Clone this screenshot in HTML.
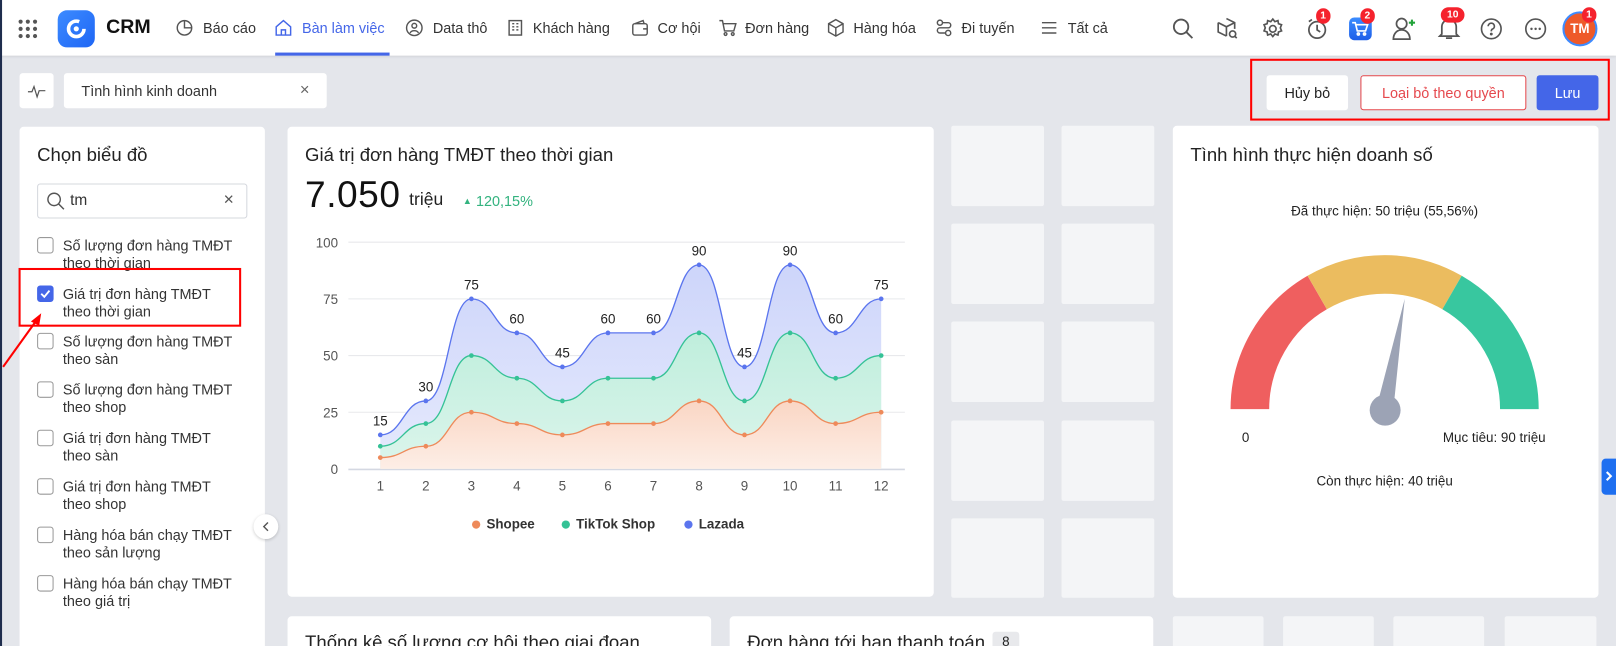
<!DOCTYPE html>
<html><head><meta charset="utf-8">
<style>
*{box-sizing:border-box;margin:0;padding:0}
html,body{width:1616px;height:646px;overflow:hidden;background:#e4e6eb}
body{font-family:"Liberation Sans","Noto Sans CJK SC",sans-serif;color:#222}
#w{position:absolute;left:0;top:0;width:1568px;height:627px;transform:scale(1.03061);transform-origin:0 0;background:#e4e6eb;overflow:hidden}
.a{position:absolute}
.top{left:0;top:0;width:1568px;height:54px;background:#fff;box-shadow:0 1px 3px rgba(0,0,0,.12)}
.nav{position:absolute;top:19px;font-size:14px;color:#333;white-space:nowrap}
.ni{position:absolute;top:18px}
.card{position:absolute;background:#fff;border-radius:4px}
.tile{position:absolute;background:#f4f5f7;border-radius:2px}
.cb{position:absolute;left:36px;width:16px;height:16px;border:1.3px solid #999;border-radius:3px;background:#fff}
.it{position:absolute;left:61px;font-size:14px;line-height:17px;color:#333}
.badge{position:absolute;background:#f5222d;color:#fff;font-size:10px;font-weight:bold;border-radius:8px;height:15px;line-height:15px;text-align:center;padding:0 4px}
</style></head><body><div id="w">
<div style="position:absolute;left:0;top:0;width:2px;height:627px;background:#1f2d4d;z-index:5"></div>
<div class="a top">
<svg class="a" style="left:17px;top:18px" width="20" height="20"><g fill="#555"><circle cx="3" cy="3" r="2"/><circle cx="10" cy="3" r="2"/><circle cx="17" cy="3" r="2"/><circle cx="3" cy="10" r="2"/><circle cx="10" cy="10" r="2"/><circle cx="17" cy="10" r="2"/><circle cx="3" cy="17" r="2"/><circle cx="10" cy="17" r="2"/><circle cx="17" cy="17" r="2"/></g></svg>
<div class="a" style="left:56px;top:10px;width:36px;height:36px;border-radius:9px;background:linear-gradient(135deg,#3d8bff,#1e66f5)"></div>
<svg class="a" style="left:63px;top:17px" width="22" height="22"><circle cx="11" cy="11" r="7.5" fill="none" stroke="#fff" stroke-width="3.5" stroke-dasharray="38 9"/><circle cx="11" cy="11" r="2.5" fill="#fff"/></svg>
<div class="a" style="left:103px;top:16px;font-size:19px;font-weight:bold;color:#111">CRM</div>
<svg class="ni" style="left:170px" width="18" height="18" fill="none" stroke="#555" stroke-width="1.4"><circle cx="9" cy="9" r="7"/><path d="M9 2v7h7"/></svg><div class="nav" style="left:197px">Báo cáo</div>
<svg class="ni" style="left:266px" width="18" height="18" fill="none" stroke="#4466e8" stroke-width="1.4"><path d="M2 8 9 2l7 6v8H2z M7 16v-5h4v5"/></svg><div class="nav" style="left:293px;color:#4466e8">Bàn làm việc</div>
<div class="a" style="left:267px;top:51px;width:111px;height:3px;background:#4466e8"></div>
<svg class="ni" style="left:393px" width="18" height="18" fill="none" stroke="#555" stroke-width="1.4"><circle cx="9" cy="9" r="7.5"/><circle cx="9" cy="7" r="2.3"/><path d="M5 14c1-3 7-3 8 0"/></svg><div class="nav" style="left:420px">Data thô</div>
<svg class="ni" style="left:491px" width="18" height="18" fill="none" stroke="#555" stroke-width="1.4"><rect x="3" y="2" width="12" height="14"/><path d="M6 5h2M10 5h2M6 8h2M10 8h2M6 11h2M10 11h2"/></svg><div class="nav" style="left:517px">Khách hàng</div>
<svg class="ni" style="left:612px" width="18" height="18" fill="none" stroke="#555" stroke-width="1.4"><rect x="2" y="5" width="14" height="11" rx="2"/><path d="M4 5 12 2l1 3M12 10h4"/></svg><div class="nav" style="left:638px">Cơ hội</div>
<svg class="ni" style="left:697px" width="18" height="18" fill="none" stroke="#555" stroke-width="1.4"><path d="M1 2h3l2 10h9l2-7H5"/><circle cx="7" cy="15" r="1.3"/><circle cx="14" cy="15" r="1.3"/></svg><div class="nav" style="left:723px">Đơn hàng</div>
<svg class="ni" style="left:802px" width="18" height="18" fill="none" stroke="#555" stroke-width="1.4"><path d="M9 1 16 5v8l-7 4-7-4V5zM2 5l7 4 7-4M9 9v8"/></svg><div class="nav" style="left:828px">Hàng hóa</div>
<svg class="ni" style="left:907px" width="18" height="18" fill="none" stroke="#555" stroke-width="1.4"><circle cx="5" cy="4" r="2.5"/><circle cx="13" cy="14" r="2.5"/><path d="M7.5 4H13a2.5 2.5 0 0 1 0 5H5a2.5 2.5 0 0 0 0 5h5.5"/></svg><div class="nav" style="left:933px">Đi tuyến</div>
<svg class="ni" style="left:1009px" width="18" height="18" fill="none" stroke="#555" stroke-width="1.4"><path d="M2 4h14M2 9h14M2 14h14"/></svg><div class="nav" style="left:1036px">Tất cả</div>
<svg class="a" style="left:1137px;top:17px" width="22" height="22" fill="none" stroke="#555" stroke-width="1.8"><circle cx="9" cy="9" r="7"/><path d="M14 14l6 6"/></svg>
<svg class="a" style="left:1180px;top:17px" width="22" height="22" fill="none" stroke="#555" stroke-width="1.6"><path d="M10 1 18 5v6M2 5v9l8 4M2 5l8 4 8-4M10 9v9"/><circle cx="16" cy="16" r="3"/><path d="M18 18l2 2"/></svg>
<svg class="a" style="left:1224px;top:17px" width="22" height="22" fill="none" stroke="#555" stroke-width="1.6"><circle cx="11" cy="11" r="3.2"/><path d="M11 1.5l2 2.5 3-1 .5 3 3 1-1.2 3 1.2 3-3 1-.5 3-3-1-2 2.5-2-2.5-3 1-.5-3-3-1 1.2-3-1.2-3 3-1 .5-3 3 1z"/></svg>
<svg class="a" style="left:1267px;top:17px" width="22" height="22" fill="none" stroke="#555" stroke-width="1.7"><circle cx="11" cy="12" r="8"/><path d="M11 7v5l3 2M3 4l3-2M19 4l-3-2"/></svg>
<div class="badge" style="left:1277px;top:8px">1</div>
<div class="a" style="left:1309px;top:17px;width:22px;height:22px;border-radius:5px;background:linear-gradient(#3b8cff,#1e5fe8)"></div>
<svg class="a" style="left:1311px;top:20px" width="18" height="16" fill="none" stroke="#fff" stroke-width="1.6"><path d="M1 2h3l2 8h8l2-6H5"/><circle cx="7" cy="13" r="1"/><circle cx="13" cy="13" r="1"/></svg>
<div class="badge" style="left:1320px;top:8px">2</div>
<svg class="a" style="left:1350px;top:15px" width="26" height="26" fill="none" stroke="#555" stroke-width="1.7"><circle cx="10" cy="8" r="5"/><path d="M2 23c0-6 4-9 8-9s8 3 8 9z"/><path d="M20 4v6M17 7h6" stroke="#22a33a" stroke-width="2"/></svg>
<svg class="a" style="left:1395px;top:16px" width="22" height="24" fill="none" stroke="#555" stroke-width="1.7"><path d="M4 17V10a7 7 0 0 1 14 0v7l2 2H2zM8 21h6"/></svg>
<div class="badge" style="left:1398px;top:7px;padding:0 6px">10</div>
<svg class="a" style="left:1436px;top:17px" width="22" height="22" fill="none" stroke="#555" stroke-width="1.6"><circle cx="11" cy="11" r="9.5"/><path d="M8 8.5a3 3 0 1 1 4 2.8c-1 .4-1 1-1 2.2"/><circle cx="11" cy="16" r=".6" fill="#555"/></svg>
<svg class="a" style="left:1479px;top:17px" width="22" height="22" fill="none" stroke="#555" stroke-width="1.6"><circle cx="11" cy="11" r="9.5"/><g fill="#555" stroke="none"><circle cx="7" cy="11" r="1.2"/><circle cx="11" cy="11" r="1.2"/><circle cx="15" cy="11" r="1.2"/></g></svg>
<div class="a" style="left:1516px;top:11px;width:34px;height:34px;border-radius:50%;border:2.5px solid #3d8bff;background:#ee5a2a;color:#fff;font-size:13px;font-weight:bold;text-align:center;line-height:29px">TM</div>
<div class="badge" style="left:1535px;top:7px">1</div>
</div>

<div class="a" style="left:19px;top:71px;width:33px;height:34px;background:#fff;border-radius:3px"></div>
<svg class="a" style="left:27px;top:80px" width="18" height="16" fill="none" stroke="#555" stroke-width="1.2"><path d="M0 9h4l2-5 3 10 2-6h6"/></svg>
<div class="a" style="left:62px;top:71px;width:255px;height:34px;background:#fff;border-radius:3px;font-size:14px;line-height:34px;padding-left:17px;color:#333">Tình hình kinh doanh<span style="position:absolute;left:229px;color:#666;font-size:16px">×</span></div>

<div class="a" style="left:1213px;top:57px;width:349px;height:60px;border:2px solid #f00"></div>
<div class="a" style="left:1229px;top:73px;width:79px;height:34px;background:#fff;border-radius:3px;font-size:14px;text-align:center;line-height:34px;color:#222">Hủy bỏ</div>
<div class="a" style="left:1320px;top:73px;width:161px;height:34px;background:#fff;border:1px solid #e5484d;border-radius:3px;font-size:14px;text-align:center;line-height:32px;color:#e5484d">Loại bỏ theo quyền</div>
<div class="a" style="left:1491px;top:73px;width:60px;height:34px;background:#4466e8;border-radius:3px;font-size:14px;text-align:center;line-height:34px;color:#fff">Lưu</div>

<!-- left panel -->
<div class="card" style="left:19px;top:123px;width:238px;height:520px"></div>
<div class="a" style="left:36px;top:140px;font-size:18px;color:#222">Chọn biểu đồ</div>
<div class="a" style="left:36px;top:178px;width:204px;height:34px;border:1px solid #d5d8de;border-radius:3px;background:#fff"></div>
<svg class="a" style="left:45px;top:186px" width="18" height="18" fill="none" stroke="#555" stroke-width="1.4"><circle cx="7.5" cy="7.5" r="6"/><path d="M12 12l5 5"/></svg>
<div class="a" style="left:68px;top:186px;font-size:15px;color:#333">tm</div>
<div class="a" style="left:217px;top:184px;font-size:17px;color:#555">×</div>
<div class="cb" style="top:230px"></div><div class="it" style="top:230px">Số lượng đơn hàng TMĐT<br>theo thời gian</div>
<div class="cb" style="top:277px;background:#4466e8;border-color:#4466e8"></div>
<svg class="a" style="left:38px;top:279px" width="12" height="12" fill="none" stroke="#fff" stroke-width="1.8"><path d="M2 6l3 3 5-6"/></svg>
<div class="it" style="top:277px">Giá trị đơn hàng TMĐT<br>theo thời gian</div>
<div class="cb" style="top:323px"></div><div class="it" style="top:323px">Số lượng đơn hàng TMĐT<br>theo sàn</div>
<div class="cb" style="top:370px"></div><div class="it" style="top:370px">Số lượng đơn hàng TMĐT<br>theo shop</div>
<div class="cb" style="top:417px"></div><div class="it" style="top:417px">Giá trị đơn hàng TMĐT<br>theo sàn</div>
<div class="cb" style="top:464px"></div><div class="it" style="top:464px">Giá trị đơn hàng TMĐT<br>theo shop</div>
<div class="cb" style="top:511px"></div><div class="it" style="top:511px">Hàng hóa bán chạy TMĐT<br>theo sản lượng</div>
<div class="cb" style="top:558px"></div><div class="it" style="top:558px">Hàng hóa bán chạy TMĐT<br>theo giá trị</div>
<div class="a" style="left:18px;top:260px;width:216px;height:57px;border:2.5px solid #f00"></div>
<svg class="a" style="left:0;top:300px" width="50" height="60"><path d="M3 56 36 10" stroke="#f00" stroke-width="2"/><path d="M40 4 30 12 38 16z" fill="#f00"/></svg>
<div class="a" style="left:246px;top:499px;width:24px;height:24px;border-radius:50%;background:#fff;box-shadow:0 1px 3px rgba(0,0,0,.2)"></div>
<svg class="a" style="left:252px;top:505px" width="12" height="12" fill="none" stroke="#555" stroke-width="1.4"><path d="M8 2 4 6l4 4"/></svg>

<!-- chart card -->
<div class="card" style="left:279px;top:123px;width:627px;height:456px"></div>
<div class="a" style="left:296px;top:140px;font-size:18px;color:#222">Giá trị đơn hàng TMĐT theo thời gian</div>
<div class="a" style="left:296px;top:168px;font-size:36px;color:#111;letter-spacing:.5px">7.050</div>
<div class="a" style="left:397px;top:184px;font-size:17px;color:#222">triệu</div>
<div class="a" style="left:449px;top:187px;font-size:14px;color:#33b37f"><span style="font-size:9px;position:relative;top:-2px">▲</span> 120,15%</div>
<svg class="a" style="left:279px;top:123px" width="627" height="456" viewBox="279 123 627 456">
<defs>
<linearGradient id="gb" x1="0" y1="0" x2="0" y2="1"><stop offset="0" stop-color="#cdd5fa"/><stop offset="1" stop-color="#e6eafd"/></linearGradient>
<linearGradient id="gg" x1="0" y1="0" x2="0" y2="1"><stop offset="0" stop-color="#bfeedc"/><stop offset="1" stop-color="#dcf5ec"/></linearGradient>
<linearGradient id="go" x1="0" y1="0" x2="0" y2="1"><stop offset="0" stop-color="#fad6c4"/><stop offset="1" stop-color="#fdeee6"/></linearGradient>
</defs>
<g stroke="#e8e9ec" stroke-width="1"><path d="M338 235H878M338 290H878M338 345H878M338 400H878"/></g>
<path d="M338 455.5H878" stroke="#d4d8e2" stroke-width="1.5"/>
<g font-size="13" fill="#555" text-anchor="end"><text x="328" y="240">100</text><text x="328" y="295">75</text><text x="328" y="350">50</text><text x="328" y="405">25</text><text x="328" y="460">0</text></g>
<path fill="url(#gb)" d="M369,422 C391.1,422 391.1,389 413.2,389 C435.3,389 435.3,290 457.4,290 C479.5,290 479.5,323 501.5,323 C523.6,323 523.6,356 545.7,356 C567.8,356 567.8,323 589.9,323 C612,323 612,323 634.1,323 C656.2,323 656.2,257 678.3,257 C700.4,257 700.4,356 722.4,356 C744.5,356 744.5,257 766.6,257 C788.7,257 788.7,323 810.8,323 C832.9,323 832.9,290 855,290 L855,455 L369,455Z"/>
<path fill="url(#gg)" d="M369,433 C391.1,433 391.1,411 413.2,411 C435.3,411 435.3,345 457.4,345 C479.5,345 479.5,367 501.5,367 C523.6,367 523.6,389 545.7,389 C567.8,389 567.8,367 589.9,367 C612,367 612,367 634.1,367 C656.2,367 656.2,323 678.3,323 C700.4,323 700.4,389 722.4,389 C744.5,389 744.5,323 766.6,323 C788.7,323 788.7,367 810.8,367 C832.9,367 832.9,345 855,345 L855,455 L369,455Z"/>
<path fill="url(#go)" d="M369,444 C391.1,444 391.1,433 413.2,433 C435.3,433 435.3,400 457.4,400 C479.5,400 479.5,411 501.5,411 C523.6,411 523.6,422 545.7,422 C567.8,422 567.8,411 589.9,411 C612,411 612,411 634.1,411 C656.2,411 656.2,389 678.3,389 C700.4,389 700.4,422 722.4,422 C744.5,422 744.5,389 766.6,389 C788.7,389 788.7,411 810.8,411 C832.9,411 832.9,400 855,400 L855,455 L369,455Z"/>
<path fill="none" stroke="#5b75ee" stroke-width="1.3" d="M369,422 C391.1,422 391.1,389 413.2,389 C435.3,389 435.3,290 457.4,290 C479.5,290 479.5,323 501.5,323 C523.6,323 523.6,356 545.7,356 C567.8,356 567.8,323 589.9,323 C612,323 612,323 634.1,323 C656.2,323 656.2,257 678.3,257 C700.4,257 700.4,356 722.4,356 C744.5,356 744.5,257 766.6,257 C788.7,257 788.7,323 810.8,323 C832.9,323 832.9,290 855,290"/>
<path fill="none" stroke="#35c296" stroke-width="1.3" d="M369,433 C391.1,433 391.1,411 413.2,411 C435.3,411 435.3,345 457.4,345 C479.5,345 479.5,367 501.5,367 C523.6,367 523.6,389 545.7,389 C567.8,389 567.8,367 589.9,367 C612,367 612,367 634.1,367 C656.2,367 656.2,323 678.3,323 C700.4,323 700.4,389 722.4,389 C744.5,389 744.5,323 766.6,323 C788.7,323 788.7,367 810.8,367 C832.9,367 832.9,345 855,345"/>
<path fill="none" stroke="#ee8a5a" stroke-width="1.3" d="M369,444 C391.1,444 391.1,433 413.2,433 C435.3,433 435.3,400 457.4,400 C479.5,400 479.5,411 501.5,411 C523.6,411 523.6,422 545.7,422 C567.8,422 567.8,411 589.9,411 C612,411 612,411 634.1,411 C656.2,411 656.2,389 678.3,389 C700.4,389 700.4,422 722.4,422 C744.5,422 744.5,389 766.6,389 C788.7,389 788.7,411 810.8,411 C832.9,411 832.9,400 855,400"/>
<g fill="#5b75ee"><circle cx="369" cy="422" r="2.3"/><circle cx="413.2" cy="389" r="2.3"/><circle cx="457.4" cy="290" r="2.3"/><circle cx="501.5" cy="323" r="2.3"/><circle cx="545.7" cy="356" r="2.3"/><circle cx="589.9" cy="323" r="2.3"/><circle cx="634.1" cy="323" r="2.3"/><circle cx="678.3" cy="257" r="2.3"/><circle cx="722.4" cy="356" r="2.3"/><circle cx="766.6" cy="257" r="2.3"/><circle cx="810.8" cy="323" r="2.3"/><circle cx="855" cy="290" r="2.3"/></g>
<g fill="#35c296"><circle cx="369" cy="433" r="2.3"/><circle cx="413.2" cy="411" r="2.3"/><circle cx="457.4" cy="345" r="2.3"/><circle cx="501.5" cy="367" r="2.3"/><circle cx="545.7" cy="389" r="2.3"/><circle cx="589.9" cy="367" r="2.3"/><circle cx="634.1" cy="367" r="2.3"/><circle cx="678.3" cy="323" r="2.3"/><circle cx="722.4" cy="389" r="2.3"/><circle cx="766.6" cy="323" r="2.3"/><circle cx="810.8" cy="367" r="2.3"/><circle cx="855" cy="345" r="2.3"/></g>
<g fill="#ee8a5a"><circle cx="369" cy="444" r="2.3"/><circle cx="413.2" cy="433" r="2.3"/><circle cx="457.4" cy="400" r="2.3"/><circle cx="501.5" cy="411" r="2.3"/><circle cx="545.7" cy="422" r="2.3"/><circle cx="589.9" cy="411" r="2.3"/><circle cx="634.1" cy="411" r="2.3"/><circle cx="678.3" cy="389" r="2.3"/><circle cx="722.4" cy="422" r="2.3"/><circle cx="766.6" cy="389" r="2.3"/><circle cx="810.8" cy="411" r="2.3"/><circle cx="855" cy="400" r="2.3"/></g>
<g font-size="13" fill="#222" text-anchor="middle"><text x="369" y="413">15</text><text x="413.2" y="380">30</text><text x="457.4" y="281">75</text><text x="501.5" y="314">60</text><text x="545.7" y="347">45</text><text x="589.9" y="314">60</text><text x="634.1" y="314">60</text><text x="678.3" y="248">90</text><text x="722.4" y="347">45</text><text x="766.6" y="248">90</text><text x="810.8" y="314">60</text><text x="855" y="281">75</text></g>
<g font-size="13" fill="#555" text-anchor="middle"><text x="369" y="476">1</text><text x="413.2" y="476">2</text><text x="457.4" y="476">3</text><text x="501.5" y="476">4</text><text x="545.7" y="476">5</text><text x="589.9" y="476">6</text><text x="634.1" y="476">7</text><text x="678.3" y="476">8</text><text x="722.4" y="476">9</text><text x="766.6" y="476">10</text><text x="810.8" y="476">11</text><text x="855" y="476">12</text></g>
<g font-size="13" font-weight="bold" fill="#333"><circle cx="462" cy="509" r="4" fill="#ee8a5a"/><text x="472" y="513">Shopee</text><circle cx="549" cy="509" r="4" fill="#35c296"/><text x="559" y="513">TikTok Shop</text><circle cx="668" cy="509" r="4" fill="#5b75ee"/><text x="678" y="513">Lazada</text></g>
</svg>

<!-- tiles -->
<div class="tile" style="left:923px;top:122px;width:90px;height:78px"></div><div class="tile" style="left:1030px;top:122px;width:90px;height:78px"></div>
<div class="tile" style="left:923px;top:217px;width:90px;height:78px"></div><div class="tile" style="left:1030px;top:217px;width:90px;height:78px"></div>
<div class="tile" style="left:923px;top:312px;width:90px;height:78px"></div><div class="tile" style="left:1030px;top:312px;width:90px;height:78px"></div>
<div class="tile" style="left:923px;top:408px;width:90px;height:78px"></div><div class="tile" style="left:1030px;top:408px;width:90px;height:78px"></div>
<div class="tile" style="left:923px;top:503px;width:90px;height:77px"></div><div class="tile" style="left:1030px;top:503px;width:90px;height:77px"></div>

<!-- gauge card -->
<div class="card" style="left:1138px;top:122px;width:413px;height:458px"></div>
<div class="a" style="left:1155px;top:140px;font-size:18px;color:#222">Tình hình thực hiện doanh số</div>
<div class="a" style="left:1138px;top:197px;width:411px;text-align:center;font-size:13px;color:#222">Đã thực hiện: 50 triệu (55,56%)</div>
<svg class="a" style="left:1138px;top:122px" width="413" height="458" viewBox="1138 122 413 458" fill="none" stroke-width="37.5">
<path d="M1212.75,397 A130.75,130.75 0 0 1 1278.1,283.8" stroke="#ef5f5f"/>
<path d="M1278.1,283.8 A130.75,130.75 0 0 1 1408.9,283.8" stroke="#ebbc5f"/>
<path d="M1408.9,283.8 A130.75,130.75 0 0 1 1474.25,397" stroke="#38c79f"/>
<polygon points="1336,394 1352,397 1363,290" fill="#9ca3b5" stroke="none"/>
<ellipse cx="1344" cy="398" rx="15" ry="15" fill="#9ca3b5" stroke="none"/>
</svg>
<div class="a" style="left:1205px;top:417px;font-size:13px;color:#222">0</div>
<div class="a" style="left:1400px;top:417px;font-size:13px;color:#222">Mục tiêu: 90 triệu</div>
<div class="a" style="left:1138px;top:459px;width:411px;text-align:center;font-size:13px;color:#222">Còn thực hiện: 40 triệu</div>
<div class="a" style="left:1554px;top:445px;width:14px;height:35px;background:#1e6ff0;border-radius:4px 0 0 4px"></div>
<svg class="a" style="left:1556px;top:456px" width="10" height="12" fill="none" stroke="#fff" stroke-width="2"><path d="M3 2l4 4-4 4"/></svg>

<!-- bottom row -->
<div class="card" style="left:279px;top:598px;width:411px;height:40px"></div>
<div class="a" style="left:296px;top:613px;font-size:18px;color:#222">Thống kê số lượng cơ hội theo giai đoạn</div>
<div class="card" style="left:708px;top:598px;width:411px;height:40px"></div>
<div class="a" style="left:725px;top:613px;font-size:18px;color:#222">Đơn hàng tới hạn thanh toán</div>
<div class="a" style="left:963px;top:613px;width:26px;height:20px;background:#e8e9ec;border-radius:3px;font-size:13px;text-align:center;line-height:20px">8</div>
<div class="tile" style="left:1138px;top:598px;width:88px;height:40px"></div>
<div class="tile" style="left:1245px;top:598px;width:88px;height:40px"></div>
<div class="tile" style="left:1352px;top:598px;width:88px;height:40px"></div>
<div class="tile" style="left:1460px;top:598px;width:89px;height:40px"></div>
</div></body></html>
